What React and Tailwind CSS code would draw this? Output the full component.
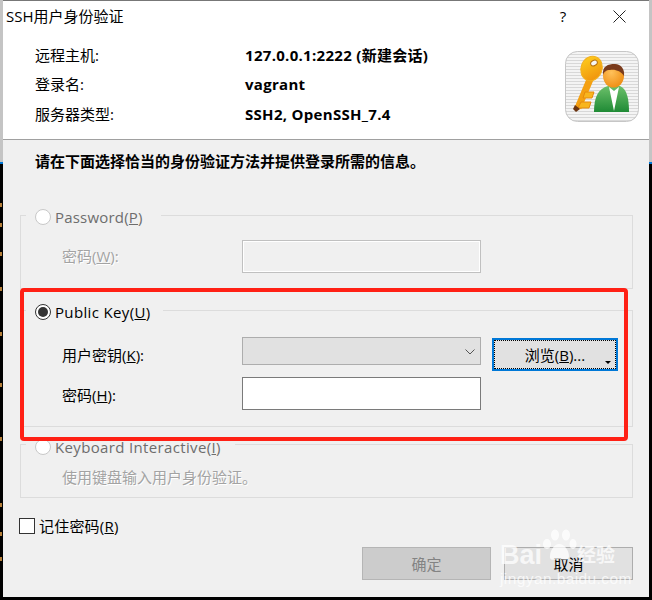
import React from "react";

const font = "font-['Open_Sans','Noto_Sans_CJK_SC',sans-serif]";
const disabledText = "text-[#a3a3a3] [text-shadow:1px_1px_0_#ffffff]";

// bits of the terminal behind the dialog that show through at the left edge
const leftBits = [203, 223, 252, 287, 332, 383, 437, 503, 532, 557];

function EdgeStrip({ bits = [] }) {
    return (
        <div className="w-[3px] h-[600px] flex flex-col shrink-0 bg-black">
            <div className="h-[162px] bg-[#c4c4c4]"></div>
            <div className="h-[2px] bg-[#0078d7]"></div>
            <svg width="3" height="436" className="block">
                {bits.map((y) => (
                    <rect key={y} x="0" y={y - 164} width="2" height="4" fill="#b57f3a" />
                ))}
            </svg>
        </div>
    );
}

function KeyUserIcon() {
    return (
        <svg width="74" height="71" viewBox="0 0 74 71" className="block">
            <defs>
                <pattern id="stripes" width="3" height="3" patternUnits="userSpaceOnUse">
                    <rect width="3" height="3" fill="#f4f4f4" />
                    <rect width="3" height="1" fill="#d8d8d8" />
                </pattern>
                <linearGradient id="keyGold" x1="0" y1="0" x2="1" y2="1">
                    <stop offset="0" stopColor="#ffd21f" />
                    <stop offset="1" stopColor="#ee8a0a" />
                </linearGradient>
                <linearGradient id="suit" x1="0" y1="0" x2="0" y2="1">
                    <stop offset="0" stopColor="#6cc06a" />
                    <stop offset="1" stopColor="#1f8a35" />
                </linearGradient>
                <radialGradient id="face" cx="0.4" cy="0.35" r="0.7">
                    <stop offset="0" stopColor="#ffc15a" />
                    <stop offset="1" stopColor="#ee8d12" />
                </radialGradient>
            </defs>
            <rect x="0.5" y="0.5" width="73" height="70" rx="12" fill="url(#stripes)" stroke="#c6c6c6" />
            <path d="M13 57 L26 26" stroke="#f4a012" strokeWidth="7" />
            <path d="M20 41 H29 L27 47 H18 Z M16 51 H26 L24 57 H13 Z" fill="#f8b51e" stroke="#e58a0c" strokeWidth="1" />
            <path d="M10 54 L15 58 L11 61 L8 58 Z" fill="#6b3410" />
            <ellipse cx="26.5" cy="17.5" rx="10.5" ry="12.5" transform="rotate(22 26.5 17.5)" fill="url(#keyGold)" stroke="#f2b120" strokeWidth="1" />
            <ellipse cx="29" cy="12" rx="3.5" ry="2.6" transform="rotate(-30 29 12)" fill="#f6f6f6" stroke="#b56f0c" strokeWidth="1" />
            <path d="M29 61 C29 46 33 38 43 35 H55 C62 38 64 48 64 61 Z" fill="url(#suit)" />
            <path d="M44 36 L49 60 L54 36 L49 40 Z" fill="#ffffff" />
            <ellipse cx="48.5" cy="25" rx="10.5" ry="11.5" fill="url(#face)" />
            <path d="M38 24 C37 15 43 13 50 13 C56 13 60 18 59 25 C56 20 50 18 45 19 C41 19 39 21 38 24 Z" fill="#7a3b1c" />
        </svg>
    );
}

function Radio({ checked, disabled }) {
    return (
        <span className={`w-[16px] h-[16px] rounded-full border bg-white flex items-center justify-center shrink-0 ${disabled ? "border-[#c8c8c8]" : "border-[#333333]"}`}>
            {checked && <span className="w-[10px] h-[10px] rounded-full bg-[#333333]"></span>}
        </span>
    );
}

function InfoRow({ label, value, className }) {
    return (
        <div className={`flex h-[20px] items-center ${className}`}>
            <span className="w-[210px]">{label}</span>
            <span className="font-bold tracking-[0.3px]">{value}</span>
        </div>
    );
}

export default function App() {
    return (
        <div className={`relative w-[652px] h-[600px] flex bg-black overflow-hidden text-[15px] leading-[20px] text-black ${font}`}>
            <EdgeStrip bits={leftBits} />

            <div className="w-[646px] h-[597px] flex flex-col bg-[#f0f0f0] border-t border-[#777777]">
                <header className="h-[139px] shrink-0 bg-white border-b border-[#a0a0a0] relative">
                    <div className="flex items-center h-[30px] pl-[3px]">
                        <span className="flex-1">SSH用户身份验证</span>
                        <span className="w-[16px] text-center mr-[42px]">?</span>
                        <svg width="13" height="13" viewBox="0 0 13 13" className="mr-[23px]">
                            <path d="M0.5 0.5 L12.5 12.5 M12.5 0.5 L0.5 12.5" stroke="#222222" strokeWidth="1" fill="none" />
                        </svg>
                    </div>
                    <div className="flex pl-[32px] pr-[10px]">
                        <div className="flex-1 pt-[14px]">
                            <InfoRow label="远程主机:" value="127.0.0.1:2222 (新建会话)" />
                            <InfoRow label="登录名:" value="vagrant" className="mt-[9px]" />
                            <InfoRow label="服务器类型:" value="SSH2, OpenSSH_7.4" className="mt-[10px]" />
                        </div>
                        <div className="pt-[20px]">
                            <KeyUserIcon />
                        </div>
                    </div>
                </header>

                <main className="flex-1 flex flex-col pl-[17px] pr-[16px]">
                    <p className="font-bold pt-[11px] pl-[15px] h-[32px] shrink-0">请在下面选择恰当的身份验证方法并提供登录所需的信息。</p>

                    <fieldset className="mt-[31px] border border-[#dcdcdc] min-w-0">
                        <legend className="ml-[5px] pl-[9px] w-[135px] h-[24px] pt-[4px] flex items-center gap-[4px] text-[#6d6d6d]">
                            <Radio disabled />
                            <span className="tracking-[0.2px]">Password(<u>P</u>)</span>
                        </legend>
                        <div className="flex pl-[41px] pt-[13px] pb-[15px]">
                            <span className={`w-[180px] leading-[33px] ${disabledText}`}>密码(<u>W</u>):</span>
                            <div className="w-[239px] h-[33px] border border-[#c0c0c0] bg-[#f0f0f0] shadow-[inset_0_0_0_1px_#ffffff]"></div>
                        </div>
                    </fieldset>

                    <fieldset className="mt-[9px] border border-[#dcdcdc] min-w-0">
                        <legend className="ml-[5px] pl-[9px] w-[137px] h-[24px] pt-[4px] flex items-center gap-[4px]">
                            <Radio checked />
                            <span className="tracking-[0.35px]">Public Key(<u>U</u>)</span>
                        </legend>
                        <div className="pl-[41px] pt-[15px] pb-[16px]">
                            <div className="flex h-[33px]">
                                <span className="w-[180px] leading-[36px]">用户密钥(<u>K</u>):</span>
                                <div className="w-[239px] h-[28px] border border-[#adadad] bg-[#e1e1e1] flex items-center justify-end pr-[5px]">
                                    <svg width="10" height="6" viewBox="0 0 10 6" className="mt-[1px]">
                                        <path d="M0.5 0.5 L5 5 L9.5 0.5" stroke="#555555" fill="none" />
                                    </svg>
                                </div>
                                <button className="relative ml-[11px] mt-[1px] w-[126px] h-[33px] border-2 border-[#0078d7] bg-[#e1e1e1] outline-1 outline-dotted outline-black -outline-offset-3 flex items-center justify-center">
                                    <span>浏览(<u>B</u>)...</span>
                                    <span className="absolute right-[5px] bottom-[5px] w-0 h-0 border-x-[3px] border-x-transparent border-t-[3px] border-t-black"></span>
                                </button>
                            </div>
                            <div className="flex h-[33px] mt-[7px]">
                                <span className="w-[180px] leading-[36px]">密码(<u>H</u>):</span>
                                <div className="w-[239px] h-[33px] border border-[#7a7a7a] bg-white"></div>
                            </div>
                        </div>
                    </fieldset>

                    <fieldset className="mt-[5px] border border-[#dcdcdc] min-w-0">
                        <legend className="ml-[5px] pl-[9px] w-[209px] h-[24px] pt-[6px] flex items-center gap-[4px] text-[#6d6d6d]">
                            <Radio disabled />
                            <span className="tracking-[0.35px]">Keyboard Interactive(<u>I</u>)</span>
                        </legend>
                        <p className={`pl-[41px] pt-[11px] pb-[10px] ${disabledText}`}>使用键盘输入用户身份验证。</p>
                    </fieldset>

                    <label className="flex items-center gap-[4px] mt-[18px] -ml-[1px] h-[20px]">
                        <span className="w-[16px] h-[16px] border border-[#333333] bg-white"></span>
                        <span className="tracking-[0.2px]">记住密码(<u>R</u>)</span>
                    </label>

                    <div className="flex justify-end gap-[13px] mt-[11px]">
                        <button className="w-[129px] h-[33px] border border-[#b5b5b5] bg-[#cccccc] text-[#838383]">确定</button>
                        <button className="w-[129px] h-[33px] border border-[#adadad] bg-[#e1e1e1]">取消</button>
                    </div>
                </main>
            </div>

            <EdgeStrip />

            {/* red annotation box drawn on top of the screenshot */}
            <div className="absolute left-[20px] top-[288px] w-[608px] h-[153px] border-4 border-[#ff2015] rounded-[4px] pointer-events-none"></div>

            {/* Baidu watermark */}
            <div className="absolute left-[500px] top-[531px] w-[120px] h-[60px] pointer-events-none text-white/75 font-['Liberation_Sans','Noto_Sans_CJK_SC',sans-serif]">
                <div className="flex items-end h-[40px]">
                    <span className="text-[27px] leading-[32px] font-bold">Bai</span>
                    <svg width="36" height="34" viewBox="0 0 36 34" className="mb-[8px] -ml-[1px] shrink-0" fill="currentColor">
                        <ellipse cx="6" cy="15" rx="4" ry="5" />
                        <ellipse cx="14" cy="6" rx="4" ry="5.5" />
                        <ellipse cx="25" cy="6" rx="4" ry="5.5" />
                        <ellipse cx="32" cy="15" rx="3.5" ry="5" />
                        <path d="M18 15 C24 15 28 22 28 27 C28 32 22 31 18 30 C14 31 8 32 9 27 C9 22 13 15 18 15 Z" />
                    </svg>
                    <span className="text-[19px] leading-[30px] font-bold">经验</span>
                </div>
                <div className="text-[15.5px] leading-[16px] tracking-[0.4px]">jingyan.baidu.com</div>
            </div>
        </div>
    );
}
